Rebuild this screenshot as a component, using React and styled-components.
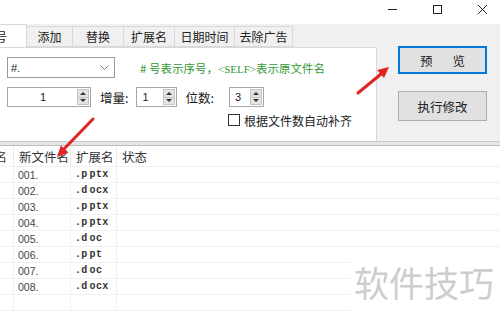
import React from 'react';
import styled, { createGlobalStyle } from 'styled-components';

const GlobalStyle = createGlobalStyle`
  html, body {
    margin: 0;
    padding: 0;
    background: #ffffff;
  }
  * {
    box-sizing: border-box;
  }
`;

const Page = styled.div`
  position: relative;
  width: 500px;
  height: 313px;
  overflow: hidden;
  display: flex;
  flex-direction: column;
  background: #f0f0f0;
  font-family: "Noto Sans CJK SC", "Liberation Sans", sans-serif;
  color: #1a1a1a;
`;

const TitleBar = styled.div`
  height: 24px;
  background: #ffffff;
  display: flex;
  justify-content: flex-end;
  align-items: flex-start;
  gap: 36px;
  padding: 5px 13px 0 0;
`;

const WinIcon = styled.svg`
  width: 9px;
  height: 9px;
  display: block;
`;

const Main = styled.div`
  display: flex;
  height: 117px;
`;

const LeftColumn = styled.div`
  width: 377px;
  display: flex;
  flex-direction: column;
`;

const TabStrip = styled.div`
  height: 23px;
  display: flex;
  align-items: flex-end;
  overflow: hidden;
  position: relative;
  z-index: 1;
`;

const Tab = styled.div`
  flex: none;
  width: ${p => p.$width}px;
  height: ${p => (p.$active ? 24 : 21)}px;
  margin-bottom: ${p => (p.$active ? -1 : 0)}px;
  display: flex;
  align-items: center;
  justify-content: ${p => (p.$active ? 'flex-end' : 'center')};
  padding-right: ${p => (p.$active ? 19 : 0)}px;
  padding-bottom: 1px;
  overflow: hidden;
  white-space: nowrap;
  background: ${p => (p.$active ? '#ffffff' : '#f0f0f0')};
  border: 1px solid #d9d9d9;
  border-left: none;
  border-bottom: ${p => (p.$active ? 'none' : '1px solid #d9d9d9')};
  font-size: 12px;
  color: #222;
`;

const Panel = styled.div`
  flex: 1;
  background: #ffffff;
  border-top: 1px solid #d9d9d9;
  border-right: 1px solid #d9d9d9;
  padding: 9px 0 0 7px;
  display: flex;
  flex-direction: column;
`;

const Row = styled.div`
  display: flex;
  align-items: center;
  height: ${p => p.$h}px;
  margin-top: ${p => p.$mt || 0}px;
  padding-left: ${p => p.$pl || 0}px;
`;

const Combo = styled.div`
  width: 108px;
  height: 21px;
  border: 1px solid #9a9a9a;
  display: flex;
  align-items: center;
  justify-content: space-between;
  padding: 0 5px 0 3px;
  font-family: "Liberation Sans", sans-serif;
  font-size: 11px;
`;

const Hint = styled.div`
  margin-left: 25px;
  font-size: 11.5px;
  color: #2f9a2f;
  white-space: nowrap;
`;

const SelfTag = styled.span`
  font-family: "Liberation Serif", serif;
  font-size: 11px;
`;

const Spin = styled.div`
  width: ${p => p.$width}px;
  height: 20px;
  border: 1px solid #a6a6a6;
  display: flex;
  align-items: stretch;
  padding: 1px;
  background: #fff;
`;

const SpinValue = styled.div`
  flex: 1;
  display: flex;
  align-items: center;
  justify-content: ${p => (p.$center ? 'center' : 'flex-start')};
  padding-left: ${p => (p.$center ? 0 : 4)}px;
  font-family: "Liberation Sans", sans-serif;
  font-size: 11px;
`;

const SpinButtons = styled.div`
  width: 12px;
  display: flex;
  flex-direction: column;
`;

const SpinHalf = styled.div`
  flex: 1;
  background: #e3e3e3;
  border: 1px solid #c4c4c4;
  border-top-width: ${p => (p.$down ? 0 : 1)}px;
  display: flex;
  align-items: center;
  justify-content: center;

  &::after {
    content: '';
    width: 0;
    height: 0;
    border-left: 3px solid transparent;
    border-right: 3px solid transparent;
    ${p => (p.$down ? 'border-top: 3px solid #333;' : 'border-bottom: 3px solid #333;')}
  }
`;

const Label = styled.div`
  margin: 0 ${p => p.$mr}px 0 ${p => p.$ml}px;
  font-size: 12.5px;
  white-space: nowrap;
`;

const CheckBox = styled.div`
  width: 12px;
  height: 12px;
  border: 1px solid #333;
  background: #fff;
  margin-right: 4px;
`;

const CheckLabel = styled.div`
  font-size: 12px;
  white-space: nowrap;
`;

const RightColumn = styled.div`
  flex: 1;
  display: flex;
  flex-direction: column;
  padding: 22px 0 0 21px;
`;

const Button = styled.div`
  width: 89px;
  height: ${p => p.$h}px;
  margin-bottom: ${p => p.$mb || 0}px;
  background: #e1e1e1;
  border: ${p => (p.$focused ? '2px solid #0078d7' : '1px solid #adadad')};
  display: flex;
  align-items: center;
  justify-content: center;
  font-size: 12.5px;
  letter-spacing: ${p => p.$spacing || 0}px;
  padding-left: ${p => p.$spacing || 0}px;
  color: #222;
`;

const Splitter = styled.div`
  height: 5px;
  background: #e6e6e6;
  border-top: 1px solid #c9c9c9;
  border-bottom: 1px solid #bdbdbd;
`;

const List = styled.div`
  flex: 1;
  background: #ffffff;
  display: flex;
  flex-direction: column;
`;

const HeaderRow = styled.div`
  height: 21px;
  display: flex;
  border-bottom: 1px solid #f0f0f0;
`;

const HeaderCell = styled.div`
  flex: ${p => (p.$width ? 'none' : 1)};
  width: ${p => (p.$width ? `${p.$width}px` : 'auto')};
  display: flex;
  align-items: center;
  justify-content: ${p => (p.$clip ? 'flex-end' : 'flex-start')};
  padding: ${p => (p.$clip ? '0 6px 0 0' : '0 0 0 5px')};
  overflow: hidden;
  white-space: nowrap;
  border-right: ${p => (p.$width ? '1px solid #e8e8e8' : 'none')};
  font-size: 12.5px;
  color: #333;
`;

const DataRow = styled.div`
  height: 16px;
  display: flex;
  border-bottom: 1px solid #f0f0f0;
`;

const Cell = styled.div`
  flex: ${p => (p.$width ? 'none' : 1)};
  width: ${p => (p.$width ? `${p.$width}px` : 'auto')};
  display: flex;
  align-items: center;
  padding-left: ${p => p.$pl || 0}px;
  border-right: ${p => (p.$width ? '1px solid #f0f0f0' : 'none')};
  white-space: nowrap;
`;

const NumText = styled.span`
  font-family: "Liberation Sans", sans-serif;
  font-size: 10.5px;
  color: #444;
`;

const ExtText = styled.span`
  font-family: "Liberation Mono", monospace;
  font-size: 10px;
  font-weight: bold;
  color: #333;
  letter-spacing: 0.3px;

  &::first-letter {
    margin-right: 2px;
  }
`;

const Watermark = styled.div`
  position: absolute;
  right: 0;
  bottom: 0;
  width: 150px;
  height: 64px;
  background: #ffffff;
  display: flex;
  align-items: center;
  padding-left: 4px;
  font-size: 35px;
  color: #cdcdcd;
  white-space: nowrap;
`;

const Overlay = styled.svg`
  position: absolute;
  left: 0;
  top: 0;
  width: 500px;
  height: 313px;
  pointer-events: none;
`;

const tabs = [
  { label: '序号', width: 27, active: true },
  { label: '添加', width: 46 },
  { label: '替换', width: 51 },
  { label: '扩展名', width: 51 },
  { label: '日期时间', width: 60 },
  { label: '去除广告', width: 58 },
];

const files = [
  ['001.', '.pptx'],
  ['002.', '.docx'],
  ['003.', '.pptx'],
  ['004.', '.pptx'],
  ['005.', '.doc'],
  ['006.', '.ppt'],
  ['007.', '.doc'],
  ['008.', '.docx'],
  ['', ''],
];

const SpinBox = ({ value, width, center }) => (
  <Spin $width={width}>
    <SpinValue $center={center}>{value}</SpinValue>
    <SpinButtons>
      <SpinHalf />
      <SpinHalf $down />
    </SpinButtons>
  </Spin>
);

export default function App() {
  return (
    <>
      <GlobalStyle />
      <Page>
        <TitleBar>
          <WinIcon viewBox="0 0 9 9">
            <line x1="0" y1="4.5" x2="9" y2="4.5" stroke="#222" strokeWidth="1" />
          </WinIcon>
          <WinIcon viewBox="0 0 9 9">
            <rect x="0.5" y="0.5" width="8" height="8" fill="none" stroke="#222" strokeWidth="1" />
          </WinIcon>
          <WinIcon viewBox="0 0 9 9">
            <path d="M0 0 L9 9 M9 0 L0 9" stroke="#222" strokeWidth="1" />
          </WinIcon>
        </TitleBar>

        <Main>
          <LeftColumn>
            <TabStrip>
              {tabs.map(t => (
                <Tab key={t.label} $width={t.width} $active={t.active}>
                  {t.label}
                </Tab>
              ))}
            </TabStrip>
            <Panel>
              <Row $h={21}>
                <Combo>
                  <span>#.</span>
                  <svg width="9" height="6" viewBox="0 0 9 6">
                    <polyline points="0.5,0.5 4.5,4.5 8.5,0.5" fill="none" stroke="#777" strokeWidth="1" />
                  </svg>
                </Combo>
                <Hint>
                  # 号表示序号，<SelfTag>&lt;SELF&gt;</SelfTag>表示原文件名
                </Hint>
              </Row>
              <Row $h={20} $mt={9}>
                <SpinBox value="1" width={84} center />
                <Label $ml={9} $mr={8}>增量:</Label>
                <SpinBox value="1" width={41} />
                <Label $ml={8} $mr={15}>位数:</Label>
                <SpinBox value="3" width={35} />
              </Row>
              <Row $h={14} $mt={6} $pl={221}>
                <CheckBox />
                <CheckLabel>根据文件数自动补齐</CheckLabel>
              </Row>
            </Panel>
          </LeftColumn>
          <RightColumn>
            <Button $h={28} $mb={17} $focused $spacing={20}>预览</Button>
            <Button $h={30}>执行修改</Button>
          </RightColumn>
        </Main>

        <Splitter />

        <List>
          <HeaderRow>
            <HeaderCell $width={14} $clip>文件名</HeaderCell>
            <HeaderCell $width={57}>新文件名</HeaderCell>
            <HeaderCell $width={46}>扩展名</HeaderCell>
            <HeaderCell>状态</HeaderCell>
          </HeaderRow>
          {files.map(([name, ext], i) => (
            <DataRow key={i}>
              <Cell $width={14} />
              <Cell $width={57} $pl={4}>
                <NumText>{name}</NumText>
              </Cell>
              <Cell $width={46} $pl={4}>
                <ExtText>{ext}</ExtText>
              </Cell>
              <Cell />
            </DataRow>
          ))}
        </List>

        <Watermark>软件技巧</Watermark>

        <Overlay viewBox="0 0 500 313">
          <line x1="93" y1="119" x2="64" y2="149" stroke="#e02424" strokeWidth="3" strokeLinecap="round" />
          <polygon points="57,157 68.5,152.5 60.8,145.4" fill="#e02424" />
          <line x1="358" y1="93" x2="381" y2="74" stroke="#e02424" strokeWidth="3" strokeLinecap="round" />
          <polygon points="389,67 384,78 377.2,70" fill="#e02424" />
        </Overlay>
      </Page>
    </>
  );
}
